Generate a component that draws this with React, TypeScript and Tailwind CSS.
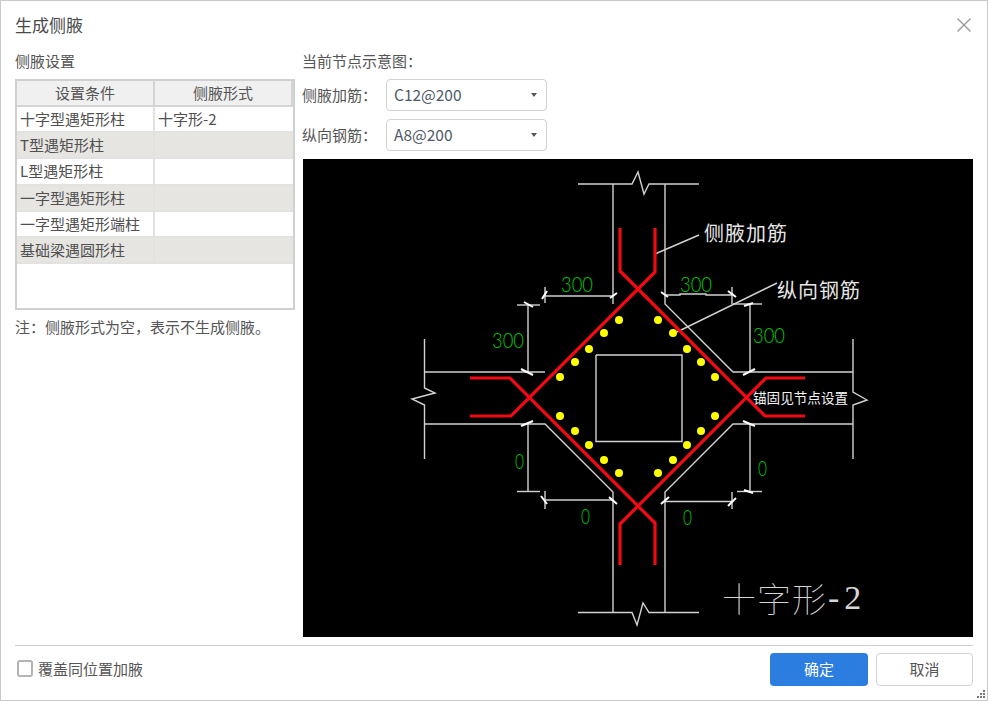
const rows = [
  { name: "十字型遇矩形柱", value: "十字形-2" },
  { name: "T型遇矩形柱", value: "" },
  { name: "L型遇矩形柱", value: "" },
  { name: "一字型遇矩形柱", value: "" },
  { name: "一字型遇矩形端柱", value: "" },
  { name: "基础梁遇圆形柱", value: "" },
]

const selects = [
  { label: "侧腋加筋：", value: "C12@200" },
  { label: "纵向钢筋：", value: "A8@200" },
]

// drawing coordinates are page pixels, the viewBox shifts them into the black panel
const frame = [
  "578,184 632,184 638,172 644,194 649,184 699,184",
  "613,184 613,304",
  "665,184 665,304 733,372 853,372",
  "853,339 853,392 867,400 853,405 853,459",
  "424.5,339 424.5,388 435,393 412,399 424.5,405 424.5,459",
  "424.5,372 545,372",
  "424.5,424 545,424 613,492 613,612.5",
  "853,424 733,424 665,492 665,612.5",
  "578,612.5 632,612.5 637,625 643,603 649,612.5 699,612.5",
  "596,355 682,355 682,441.5 596,441.5 596,355",
]

const dimensions = [
  "545,287 545,303", "545,296 613,296",
  "517,305 540,305", "528,305 528,372",
  "665,295 680,295 680,294 706,294 706,295 732,295", "732,287 732,304",
  "733,304 762,304", "750,304 750,372",
  "528,424 528,491.5", "517,491.5 540,491.5",
  "545,491 545,509", "545,500 613,500",
  "750,424 750,491.5", "737,491.5 762,491.5",
  "665,501.5 732,501.5", "732,492 732,509",
  "655,254 699,235", "677,332 777,283",
]

const slashes = [
  [542, 299, 547, 291], [610, 298, 617, 293], [524, 302, 533, 307], [521, 369, 533, 375],
  [661, 292, 668, 297], [728, 291, 736, 297], [744, 306, 753, 303], [743, 375, 755, 369],
  [521, 426, 533, 421], [541, 496, 547, 504], [609, 497, 617, 504],
  [661, 504, 669, 497], [728, 506, 736, 498], [744, 490, 753, 493], [743, 421, 755, 426],
]

const bars = [
  "620,228 620,271 765,416 805,416",
  "655,228 655,272 511,416 470,416",
  "470,378 510,378 655,523 655,565",
  "620,565 620,524 766,378 805,378",
]

const dots = [
  [619, 320], [604, 333], [589, 349], [575, 362], [560, 377],
  [658, 320], [673, 333], [687, 349], [701, 362], [715, 377],
  [560, 416], [575, 431], [589, 445], [604, 460], [619, 473],
  [715, 416], [701, 431], [687, 445], [673, 460], [658, 473],
]

const sizes = [
  { x: 561, y: 283, text: "300", width: 32 },
  { x: 492, y: 339, text: "300", width: 32 },
  { x: 680, y: 283, text: "300", width: 32 },
  { x: 753, y: 334, text: "300", width: 32 },
  { x: 515, y: 460, text: "0", width: 9 },
  { x: 581, y: 515, text: "0", width: 9 },
  { x: 758, y: 467, text: "0", width: 9 },
  { x: 683, y: 516, text: "0", width: 9 },
]

function NodeDiagram() {
  return (
    <svg viewBox="303 159 670 478" className="block h-[478px] w-[670px] bg-black">
      <g fill="none" stroke="#d2d2d2" strokeWidth="1.4">
        {frame.map((points) => (
          <polyline key={points} points={points} />
        ))}
        {dimensions.map((points) => (
          <polyline key={points} points={points} />
        ))}
      </g>
      <g stroke="#ffffff" strokeWidth="2">
        {slashes.map(([x1, y1, x2, y2]) => (
          <line key={`${x1}-${y1}`} x1={x1} y1={y1} x2={x2} y2={y2} />
        ))}
      </g>
      <g fill="none" stroke="#f00a14" strokeWidth="3.2">
        {bars.map((points) => (
          <polyline key={points} points={points} />
        ))}
      </g>
      <g fill="#ffff00">
        {dots.map(([cx, cy]) => (
          <circle key={`${cx}-${cy}`} cx={cx} cy={cy} r="4" />
        ))}
      </g>
      <g fill="#00c800" dominantBaseline="central" fontSize="21" fontWeight="300" className="font-['Lato','Liberation_Sans',sans-serif]">
        {sizes.map((s) => (
          <text key={`${s.x}-${s.y}`} x={s.x} y={s.y} textLength={s.width} lengthAdjust="spacingAndGlyphs">
            {s.text}
          </text>
        ))}
      </g>
      <g fill="#e6e6e6" dominantBaseline="central" className="font-['Noto_Sans_CJK_SC',sans-serif]">
        <text x="704" y="232" fontSize="20" letterSpacing="1">侧腋加筋</text>
        <text x="777" y="289" fontSize="20" letterSpacing="1">纵向钢筋</text>
        <text x="753" y="397" fontSize="13.6" fill="#f4f4f4">锚固见节点设置</text>
        <text x="722" y="597" fontSize="34" fontWeight="100" letterSpacing="1" fill="#d6d6d6">
          十字形
          <tspan dx="1" letterSpacing="5" className="font-['Liberation_Serif',serif]">-2</tspan>
        </text>
      </g>
    </svg>
  )
}

export default function App() {
  return (
    <div className="relative flex h-[701px] w-[988px] flex-col border border-[#c9c9c9] bg-white font-['Noto_Sans_CJK_SC','Noto_Sans',sans-serif] text-[15px] text-[#555555]">
      <div className="flex h-[49px] items-center justify-between pb-[2px] pl-[14px] pr-[16px]">
        <span className="text-[17px] leading-none text-[#4a4a4a]">生成侧腋</span>
        <svg viewBox="0 0 14 14" className="h-[14px] w-[14px]" fill="none" stroke="#999999" strokeWidth="1.4">
          <path d="M0.5 0.5 L13.5 13.5 M13.5 0.5 L0.5 13.5" />
        </svg>
      </div>

      <div className="flex pl-[14px]">
        <div className="w-[280px]">
          <div className="flex h-[20px] items-center leading-none">侧腋设置</div>
          <div className="mt-[9px] h-[231px] border-2 border-[#d0d0d0] bg-white">
            <div className="flex h-[26px] border-b-2 border-[#d4d4d4] bg-[#f0f0f0] text-center leading-[24px]">
              <div className="w-[138px] border-r-2 border-[#d4d4d4]">设置条件</div>
              <div className="flex-1 border-r-2 border-[#d4d4d4]">侧腋形式</div>
            </div>
            {rows.map((row, index) => (
              <div key={row.name} className={`flex h-[26.2px] border-b-2 border-[#e2e2e0] leading-[24px] text-[#505050] ${index % 2 === 1 ? "bg-[#e6e5e2]" : "bg-white"}`}>
                <div className="w-[138px] truncate border-r-2 border-[#e2e2e0] pl-[3px]">{row.name}</div>
                <div className="flex-1 pl-[3px]">{row.value}</div>
              </div>
            ))}
          </div>
          <div className="mt-[7px] leading-[20px]">注：侧腋形式为空，表示不生成侧腋。</div>
        </div>

        <div className="ml-[8px] w-[670px]">
          <div className="-ml-px flex h-[20px] items-center leading-none">当前节点示意图：</div>
          <div className="mt-[9px] flex flex-col gap-[8px]">
            {selects.map((item) => (
              <div key={item.label} className="flex items-center">
                <span className="-ml-px w-[84px] shrink-0">{item.label}</span>
                <div className="flex h-[32px] w-[161px] items-center justify-between rounded-[4px] border border-[#d2d2d2] pl-[7px] pr-[9px] text-[15.5px] text-[#4d5a68]">
                  {item.value}
                  <span className="h-0 w-0 border-x-[3px] border-t-[4px] border-x-transparent border-t-[#555555]" />
                </div>
              </div>
            ))}
          </div>
          <div className="mt-[8px]">
            <NodeDiagram />
          </div>
        </div>
      </div>

      <div className="mx-[14px] mt-[8px] flex items-start justify-between border-t border-[#d0d0d0] pt-[7px]">
        <label className="mt-[7px] ml-[2px] flex items-center gap-[5px] leading-none">
          <span className="h-[17px] w-[16px] rounded-[3px] border-2 border-[#b4b4b4] bg-white" />
          覆盖同位置加腋
        </label>
        <div className="flex gap-[8px]">
          <button className="h-[33px] w-[98px] rounded-[4px] bg-[#2b7de0] text-[15px] text-white">确定</button>
          <button className="h-[33px] w-[97px] rounded-[4px] border border-[#d2d2d2] bg-white text-[15px] text-[#555555]">取消</button>
        </div>
      </div>

      <svg viewBox="0 0 10 10" className="absolute bottom-[1px] right-[1px] h-[10px] w-[10px]" fill="#777777">
        <rect x="7" y="1" width="2" height="2" />
        <rect x="4" y="4" width="2" height="2" />
        <rect x="7" y="4" width="2" height="2" />
        <rect x="1" y="7" width="2" height="2" />
        <rect x="4" y="7" width="2" height="2" />
        <rect x="7" y="7" width="2" height="2" />
      </svg>
    </div>
  )
}
